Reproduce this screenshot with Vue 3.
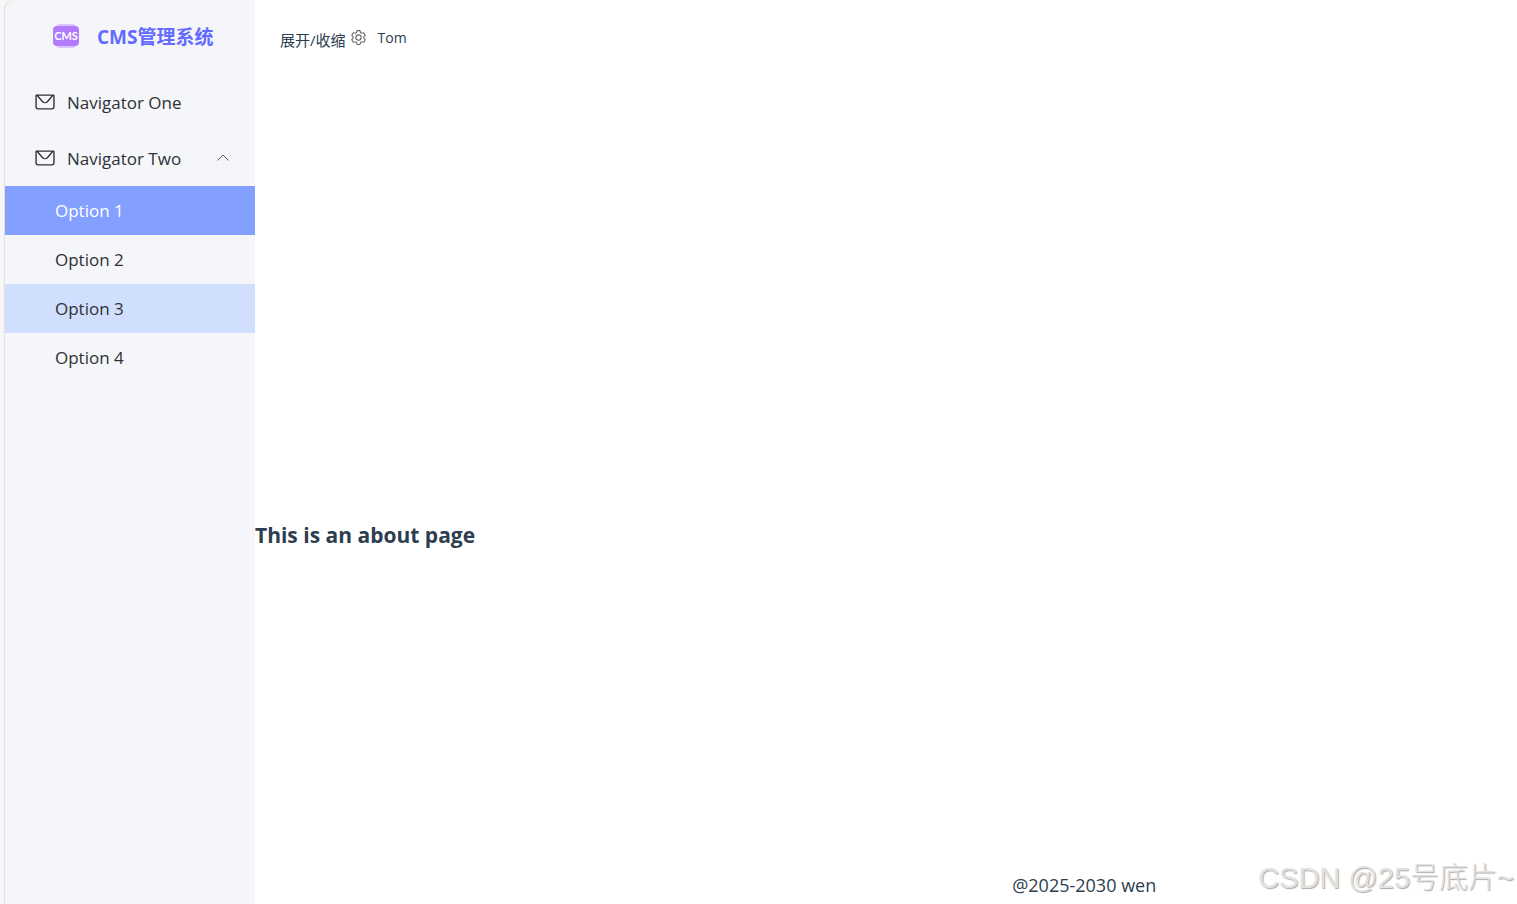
<template>
  <div class="layout">
    <aside class="sidebar">
      <div class="brand">
        <svg class="brand-logo" viewBox="0 0 26 26" aria-hidden="true">
          <rect x="3" y="1" width="20" height="24" rx="4" fill="#dcc4fd" />
          <rect x="0" y="3" width="26" height="20" rx="4" fill="#b07cfc" />
          <text x="13" y="17" text-anchor="middle">CMS</text>
        </svg>
        <span class="brand-name">CMS管理系统</span>
      </div>

      <nav class="menu">
        <button type="button" class="menu-item">
          <svg class="menu-icon" viewBox="0 0 1024 1024" aria-hidden="true">
            <path :d="icons.message" />
          </svg>
          <span>Navigator One</span>
        </button>
        <button type="button" class="menu-item" :aria-expanded="opened" @click="opened = !opened">
          <svg class="menu-icon" viewBox="0 0 1024 1024" aria-hidden="true">
            <path :d="icons.message" />
          </svg>
          <span>Navigator Two</span>
          <svg class="menu-arrow" :class="{ closed: !opened }" viewBox="0 0 14 14" aria-hidden="true">
            <path d="M1.5 9.5 7 4l5.500 5.500" />
          </svg>
        </button>
        <ul v-show="opened" class="submenu">
          <li v-for="item in options" :key="item">
            <button
              type="button"
              class="submenu-item"
              :class="{ active: item === active, hover: item === hovered }"
              @click="active = item"
              @mouseenter="hovered = item"
            >
              {{ item }}
            </button>
          </li>
        </ul>
      </nav>
    </aside>

    <div class="container">
      <header class="header">
        <button type="button" class="toggle">展开/收缩</button>
        <svg class="setting" viewBox="0 0 1024 1024" aria-hidden="true">
          <path :d="icons.setting" />
        </svg>
        <span class="user">Tom</span>
      </header>
      <main class="main">
        <h1>This is an about page</h1>
      </main>
      <footer class="footer">@2025-2030 wen</footer>
    </div>

    <div class="watermark">CSDN @25号底片~</div>
  </div>
</template>

<script setup>
import { ref } from 'vue';

const opened = ref(true);
const active = ref('Option 1');
const hovered = ref('Option 3');
const options = ['Option 1', 'Option 2', 'Option 3', 'Option 4'];

// 图标路径
const icons = {
  message:
    'M128 224v512a64 64 0 0 0 64 64h640a64 64 0 0 0 64-64V224H128zm0-64h768a64 64 0 0 1 64 64v512a128 128 0 0 1-128 128H192A128 128 0 0 1 64 736V224a64 64 0 0 1 64-64z M904 224 656.512 506.880a192 192 0 0 1-289.024 0L120 224h784zm-698.944 0 210.560 240.704a128 128 0 0 0 192.704 0L818.944 224H205.056z',
  setting:
    'M600.704 64a32 32 0 0 1 30.464 22.208l35.200 109.376c14.784 7.232 28.928 15.360 42.432 24.512l112.384-24.192a32 32 0 0 1 34.432 15.360L944.320 364.800a32 32 0 0 1-4.032 37.504l-77.120 85.120a357.120 357.120 0 0 1 0 49.024l77.120 85.248a32 32 0 0 1 4.032 37.504l-88.704 153.600a32 32 0 0 1-34.432 15.296L708.800 803.904c-13.440 9.088-27.648 17.280-42.368 24.512l-35.264 109.376A32 32 0 0 1 600.704 960H423.296a32 32 0 0 1-30.464-22.208L357.696 828.480a351.616 351.616 0 0 1-42.560-24.640l-112.320 24.256a32 32 0 0 1-34.432-15.360L79.680 659.200a32 32 0 0 1 4.032-37.504l77.120-85.248a357.120 357.120 0 0 1 0-48.896l-77.120-85.248A32 32 0 0 1 79.680 364.800l88.704-153.600a32 32 0 0 1 34.432-15.296l112.320 24.256c13.568-9.152 27.776-17.408 42.560-24.640l35.200-109.312A32 32 0 0 1 423.232 64H600.640zm-23.424 64H446.720l-36.352 113.088-24.512 11.968a294.113 294.113 0 0 0-34.816 20.096l-22.656 15.360-116.224-25.088-65.280 113.152 79.680 88.192-1.920 27.136a293.120 293.120 0 0 0 0 40.192l1.920 27.136-79.808 88.192 65.344 113.152 116.224-25.024 22.656 15.296a294.113 294.113 0 0 0 34.816 20.096l24.512 11.968L446.720 896h130.688l36.480-113.152 24.448-11.904a288.282 288.282 0 0 0 34.752-20.096l22.592-15.296 116.288 25.024 65.280-113.152-79.744-88.192 1.920-27.136a293.120 293.120 0 0 0 0-40.256l-1.920-27.136 79.808-88.128-65.344-113.152-116.288 24.960-22.592-15.232a287.616 287.616 0 0 0-34.752-20.096l-24.448-11.904L577.344 128zM512 320a192 192 0 1 1 0 384 192 192 0 0 1 0-384zm0 64a128 128 0 1 0 0 256 128 128 0 0 0 0-256z',
};
</script>

<style>
body {
  margin: 0;
  background: #fff;
}
</style>

<style scoped>
.layout {
  position: relative;
  display: flex;
  box-sizing: border-box;
  min-height: 100vh;
  padding-left: 5px;
  background: #f7f7f7;
  color: #2c3e50;
  font-family: 'Segoe UI', 'Open Sans', 'Noto Sans CJK SC', sans-serif;
  font-size: 17px;
}

button {
  padding: 0;
  border: none;
  background: none;
  color: inherit;
  font-family: inherit;
  text-align: left;
  cursor: pointer;
}

.sidebar {
  flex: 0 0 250px;
  border-top-left-radius: 10px;
  background: #f4f6fa;
  box-shadow: -1px 0 1px #dedede;
}

.brand {
  display: flex;
  align-items: center;
  gap: 18px;
  box-sizing: border-box;
  height: 74px;
  padding: 0 0 2px 48px;
}

.brand-logo {
  width: 26px;
  height: 26px;
}

.brand-logo text {
  fill: #fff;
  font-family: Lato, sans-serif;
  font-size: 11px;
  font-weight: 700;
}

.brand-name {
  color: #626aff;
  font-size: 19px;
  font-weight: 700;
}

.menu-item {
  display: flex;
  align-items: center;
  gap: 11px;
  width: 100%;
  height: 56px;
  padding: 0 25px 0 29px;
  color: #303133;
  font-size: 17px;
}

.menu-icon {
  width: 22px;
  height: 22px;
  fill: #303133;
}

.menu-arrow {
  width: 14px;
  height: 14px;
  margin-left: auto;
  fill: none;
  stroke: #606266;
}

.menu-arrow.closed {
  transform: rotate(180deg);
}

.submenu {
  margin: 0;
  padding: 0;
  list-style: none;
}

.submenu-item {
  display: block;
  width: 100%;
  height: 49px;
  padding-left: 50px;
  color: #303133;
  font-size: 17px;
}

.submenu-item.hover {
  background: #d1dfff;
}

.submenu-item.active {
  background: #839fff;
  color: #fff;
}

.container {
  display: flex;
  flex: 1;
  flex-direction: column;
  background: #fff;
}

.header {
  display: flex;
  align-items: center;
  height: 74px;
  padding-left: 25px;
  font-size: 14px;
}

.toggle {
  padding-top: 4px;
  font-size: 15px;
}

.setting {
  width: 17px;
  height: 17px;
  margin: 0 11px 0 4px;
  fill: #606266;
}

.main {
  display: flex;
  flex: 1;
  align-items: center;
  padding-top: 124px;
}

.main h1 {
  margin: 0;
  font-size: 21px;
  font-weight: 700;
}

.footer {
  padding: 0 0 6px 60%;
  font-size: 18px;
  line-height: 26px;
}

.watermark {
  position: absolute;
  right: 3px;
  bottom: 8px;
  color: #e2e2e2;
  font-family: 'Liberation Sans', 'Noto Sans CJK SC', sans-serif;
  font-size: 29px;
  font-weight: 300;
  text-shadow: 1px 1px 1px #aaa;
}
</style>
